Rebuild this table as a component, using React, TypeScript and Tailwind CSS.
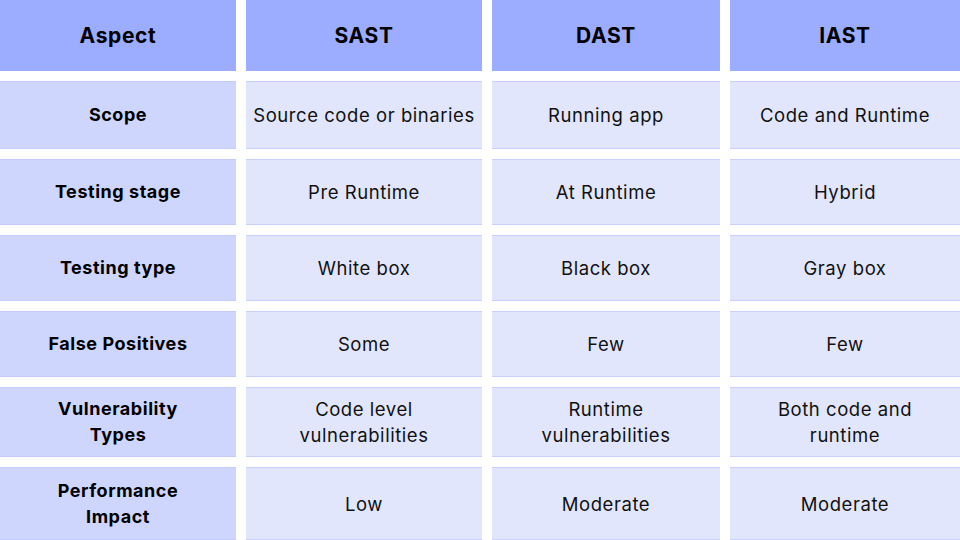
import React from 'react';

const headers = ['Aspect', 'SAST', 'DAST', 'IAST'];

const rows: string[][] = [
  ['Scope', 'Source code or binaries', 'Running app', 'Code and Runtime'],
  ['Testing stage', 'Pre Runtime', 'At Runtime', 'Hybrid'],
  ['Testing type', 'White box', 'Black box', 'Gray box'],
  ['False Positives', 'Some', 'Few', 'Few'],
  ['Vulnerability Types', 'Code level vulnerabilities', 'Runtime vulnerabilities', 'Both code and runtime'],
  ['Performance Impact', 'Low', 'Moderate', 'Moderate'],
];

// line breaks as in the slide
const wrap: Record<string, string[]> = {
  'Vulnerability Types': ['Vulnerability', 'Types'],
  'Code level vulnerabilities': ['Code level', 'vulnerabilities'],
  'Runtime vulnerabilities': ['Runtime', 'vulnerabilities'],
  'Both code and runtime': ['Both code and', 'runtime'],
  'Performance Impact': ['Performance', 'Impact'],
};

function CellText({ text }: { text: string }) {
  const lines = wrap[text] || [text];
  return (
    <div className="text-center leading-[26px]">
      {lines.map((l) => (
        <div key={l}>{l}</div>
      ))}
    </div>
  );
}

export default function App() {
  return (
    <div
      className="w-[960px] h-[540px] bg-white overflow-hidden text-[#111111]"
      style={{ fontFamily: 'Inter, "Open Sans", sans-serif' }}
    >
      <div className="grid grid-cols-[236px_236px_228px_1fr] grid-rows-[71px_68px_66px_66px_66px_70px_73px] gap-x-[10px] gap-y-[10px] h-full">
        {headers.map((h) => (
          <div
            key={h}
            className="bg-[#9cacfe] flex items-center justify-center text-[21px] tracking-[0.03em] font-bold text-black"
          >
            {h}
          </div>
        ))}
        {rows.map((r) =>
          r.map((c, i) => (
            <div
              key={r[0] + i}
              className={
                i === 0
                  ? 'bg-[#ced6fe] border-y border-[#c3ccfc] flex items-center justify-center text-[18px] tracking-[0.03em] font-bold text-black'
                  : 'bg-[#e2e6fc] border-y border-[#c9d0fb] flex items-center justify-center text-[18.5px] tracking-[0.03em] font-normal'
              }
            >
              <CellText text={c} />
            </div>
          ))
        )}
      </div>
    </div>
  );
}
